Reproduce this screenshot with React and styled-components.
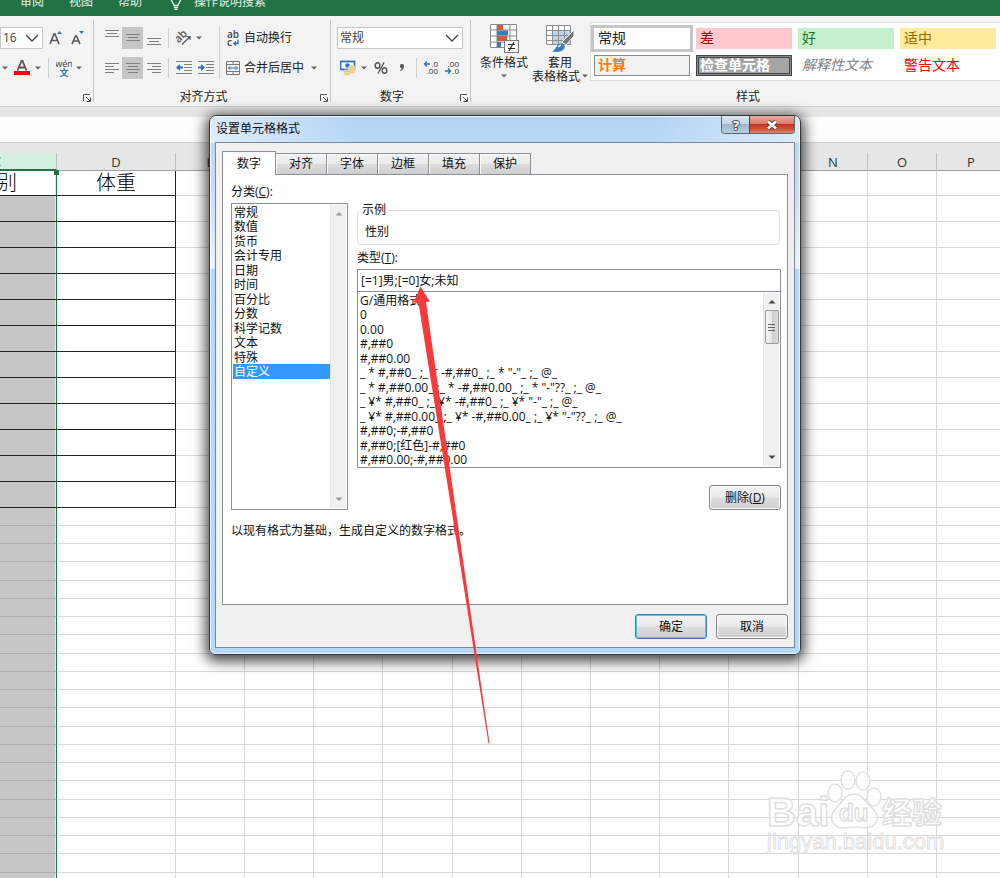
import React, {useState} from 'react';
import styled, {createGlobalStyle, css} from 'styled-components';

const GlobalStyle = createGlobalStyle`
  *, *::before, *::after {
    box-sizing: border-box;
  }

  body {
    margin: 0;
    overflow: hidden;
    background: #fff;
    color: #222;
    font-family: "Open Sans", "Noto Sans CJK SC", sans-serif;
    font-size: 12px;
    line-height: 16px;
  }

  button, input, select {
    font: inherit;
    color: inherit;
  }

  svg {
    display: block;
    flex: none;
  }
`

const Page = styled.div`
  position: relative;
  display: flex;
  flex-direction: column;
  height: 100vh;
  overflow: hidden;
`

/* ---------- ribbon ---------- */

const RibbonTabs = styled.nav`
  display: flex;
  flex: none;
  align-items: flex-end;
  gap: 25px;
  height: 16px;
  padding-left: 20px;
  overflow: hidden;
  background: #217346;
  color: #e6f1ea;

  a {
    display: flex;
    align-items: center;
    gap: 12px;
    height: 28px;
    color: inherit;
    text-decoration: none;
  }

  a:last-child {
    margin-left: 3px;
  }
`

const RibbonBar = styled.div`
  display: flex;
  flex: none;
  height: 91px;
  overflow: hidden;
  background: #f3f3f3;
  border-bottom: 1px solid #d2d2d2;
`

const Group = styled.section`
  display: flex;
  flex-direction: column;
  flex: ${({$grow}) => $grow ? '1 0 554px' : 'none'};
  width: ${({$width}) => $width ? $width + 'px' : 'auto'};
  padding-top: 11px;
  position: relative;

  &:not(:last-child)::after {
    content: '';
    position: absolute;
    top: 4px;
    bottom: 4px;
    right: 0;
    width: 1px;
    background: #c4c4c4;
  }
`

const GroupContent = styled.div`
  display: flex;
  height: 52px;
  padding-left: ${({$indent}) => $indent || 0}px;
`

const GroupFooter = styled.div`
  display: flex;
  justify-content: center;
  margin-top: 10px;
  padding-right: ${({$launcher}) => $launcher ? 18 : 0}px;
  position: relative;
`

const Launcher = styled.button`
  position: absolute;
  right: 3px;
  top: 5px;
  padding: 0;
  border: none;
  background: none;
`

const Stack = styled.div`
  display: flex;
  flex-direction: column;
  gap: 8px;
`

const Row = styled.div`
  display: flex;
  align-items: center;
  height: 22px;
`

const Tool = styled.button`
  display: flex;
  align-items: center;
  justify-content: center;
  width: ${({$width}) => $width || 21}px;
  height: 22px;
  padding: 0;
  border: none;
  background: ${({$active}) => $active ? '#c6c6c6' : 'none'};
`

const LabelTool = styled(Tool)`
  justify-content: flex-start;
  width: auto;
  gap: 3px;
  padding-left: 3px;
  white-space: nowrap;
`

const Divider = styled.span`
  width: 1px;
  height: ${({$tall}) => $tall ? 52 : 20}px;
  margin: 0 ${({$gap}) => $gap}px;
  background: #d0d0d0;
`

const Combo = styled.div`
  display: flex;
  align-items: center;
  position: relative;
  width: ${({$width}) => $width}px;
  height: 22px;
  background: #fff;
  border: 1px solid #c6c6c6;

  select {
    width: 100%;
    height: 20px;
    padding: 0 2px;
    border: none;
    outline: none;
    background: none;
    appearance: none;
    color: #444;
  }

  svg {
    position: absolute;
    right: 3px;
    pointer-events: none;
  }
`

const BigTool = styled.button`
  display: flex;
  flex-direction: column;
  align-items: center;
  width: 56px;
  height: 64px;
  padding: 0;
  margin-top: -4px;
  border: none;
  background: none;
  line-height: 14px;
  white-space: nowrap;

  svg:first-child {
    margin-bottom: 3px;
  }
`

const BigLabel = styled.span`
  display: flex;
  align-items: center;
  justify-content: center;
  gap: 2px;
  height: 14px;
`

const Gallery = styled.div`
  display: grid;
  grid-template-columns: repeat(4, 96px);
  grid-auto-rows: 21px;
  gap: 6px;
  flex: 1;
  height: 59px;
  margin: -5px 0 0 2px;
  padding: 5px 3px;
  background: #fff;
  border: 1px solid #dadada;
`

const StyleCell = styled.button`
  padding: 0 4px 2px;
  border: none;
  background: ${({$bg}) => $bg || '#fff'};
  color: ${({$color}) => $color || '#222'};
  font-size: 14px;
  line-height: 18px;
  text-align: left;
  white-space: nowrap;
  font-weight: ${({$bold}) => $bold ? 700 : 400};
  font-style: ${({$italic}) => $italic ? 'italic' : 'normal'};
  ${({$variant}) => $variant === 'selected' && css`
    outline: 3px solid #c6c6c6;
  `}
  ${({$variant}) => $variant === 'boxed' && css`
    box-shadow: inset 0 0 0 1px #8a8a8a;
  `}
  ${({$variant}) => $variant === 'double' && css`
    box-shadow: inset 0 0 0 1px #444, inset 0 0 0 2px #8a8a8a, inset 0 0 0 3px #444;
  `}
`

/* ---------- sheet ---------- */

const FormulaBar = styled.div`
  flex: none;
  height: 36px;
  background: #fdfdfd;
  border-top: 10px solid #e6e6e6;
  border-bottom: 1px solid #d0d0d0;
`

const Sheet = styled.main`
  flex: 1;
  overflow: hidden;
  padding-top: 10px;
  background: linear-gradient(#e6e6e6 10px, #fff 10px);
`

const Grid = styled.table`
  table-layout: fixed;
  width: 1px;
  margin-left: -62px;
  border-spacing: 0;

  th, td {
    padding: 0;
    text-align: center;
    border-right: 1px solid #d8d8d8;
    border-bottom: 1px solid #d8d8d8;
  }

  th {
    height: 18px;
    background: #e6e6e6;
    border-right-color: #bdbdbd;
    border-bottom-color: #a0a0a0;
    color: #333;
    font-size: 13px;
    font-weight: 400;
    line-height: 16px;
  }

  td {
    height: 18px;
  }

  tr:nth-child(4n) td {
    height: 19px;
  }

  tbody:first-of-type tr td {
    height: 26px;
  }

  tbody:first-of-type tr:first-child td {
    height: 25px;
  }
`

const Col = styled.col`
  width: ${({$width}) => $width}px;
`

const ColumnHead = styled.th`
  ${({$selected}) => $selected && css`
    && {
      background: #d3f0e0;
      border-bottom: 2px solid #217346;
      color: #217346;
      line-height: 15px;
    }
  `}
`

const Cell = styled.td`
  color: #000;
  font-size: 20px;
  font-weight: 300;
  line-height: 24px;
  ${({$framed}) => $framed && css`
    && {
      border-color: #222;
    }
  `}
  ${({$selected}) => $selected && css`
    && {
      position: relative;
      background: ${({$active}) => $active ? '#fff' : '#c6c6c6'};
      border-right: 1px solid #217346;
      border-bottom-color: ${({$framed}) => $framed ? '#222' : '#adadad'};
      box-shadow: inset -1px 0 #dfe9e3;
    }
  `}
`

const Handle = styled.span`
  position: absolute;
  top: -1px;
  right: -3px;
  z-index: 1;
  width: 5px;
  height: 5px;
  background: #217346;
`

/* ---------- dialog ---------- */

const Dialog = styled.div`
  position: absolute;
  top: 115px;
  left: 209px;
  width: 592px;
  padding: 0 5px 6px;
  border: 1px solid #34383e;
  border-radius: 7px 7px 6px 6px;
  background:
    linear-gradient(90deg, rgba(255, 255, 255, .55), rgba(255, 255, 255, 0) 25%, rgba(255, 255, 255, 0) 75%, rgba(255, 255, 255, .5)) 0 0 / 100% 27px no-repeat,
    linear-gradient(#b2d2f3, #b8d8f8 27px, #cadbee 50px, #c8dbf0 66px, #eaf3fc 153px, #b5d8fb 153px);
  box-shadow: inset 0 0 0 1px rgba(255, 255, 255, .7), 0 3px 14px 3px rgba(0, 0, 0, .75);
  color: #111;
`

const TitleBar = styled.header`
  display: flex;
  align-items: flex-start;
  justify-content: space-between;
  height: 26px;
  padding-left: 1px;

  h1 {
    margin: 5px 0 0;
    font-size: 12px;
    font-weight: 400;
    line-height: 16px;
  }
`

const WindowButtons = styled.div`
  display: flex;
  border: 1px solid #5c6672;
  border-top: none;
  border-radius: 0 0 4px 4px;
  overflow: hidden;
`

const WindowButton = styled.button`
  display: flex;
  align-items: center;
  justify-content: center;
  width: ${({$close}) => $close ? 45 : 27}px;
  height: 17px;
  padding: 0;
  border: none;
  border-left: ${({$close}) => $close ? '1px solid #7c2b22' : 'none'};
  background: ${({$close}) => $close
    ? 'linear-gradient(#e9a99e, #d9796b 48%, #bf3421 50%, #cf5a3f 80%, #e08a6c)'
    : 'linear-gradient(#dbe6f2, #c3d3e4 48%, #9db3ca 50%, #b9cde2)'};
`

const DialogBody = styled.div`
  padding: 8px 6px 8px 6px;
  background: #f0f0f0;
  border: 1px solid #7d8793;
`

const TabList = styled.div`
  display: flex;
  align-items: flex-end;
  height: 23px;
`

const Tab = styled.button`
  width: 51px;
  height: 21px;
  padding: 0;
  border: 1px solid #8c9099;
  border-left: none;
  border-bottom: none;
  background: linear-gradient(#f2f2f2, #ebebeb 50%, #dcdcdc 52%, #cfcfcf);
  box-shadow: inset 1px 1px #fafafa;
  ${({$active}) => $active && css`
    position: relative;
    z-index: 1;
    width: 54px;
    height: 24px;
    margin-bottom: -1px;
    border-left: 1px solid #8c9099;
    background: #fff;
  `}
`

const Panel = styled.div`
  min-height: 431px;
  padding: 9px 6px 0 8px;
  background: #fff;
  border: 1px solid #8c9099;
`

const Columns = styled.div`
  display: grid;
  grid-template-columns: 117px 1fr;
  column-gap: 9px;
`

const FieldLabel = styled.label`
  display: block;
  margin-bottom: 3px;
`

const ListFrame = styled.div`
  display: flex;
  height: ${({$height}) => $height}px;
  padding: 1px;
  border: 1px solid #8c9099;
  background: #fff;
`

const List = styled.ul`
  flex: 1;
  margin: 0;
  padding: 0;
  overflow: hidden;
  list-style: none;
`

const Option = styled.li`
  height: 14px;
  padding-left: 1px;
  line-height: 15px;
  white-space: pre;
  background: ${({$selected}) => $selected ? '#3399ff' : 'none'};
  color: ${({$selected}) => $selected ? '#fff' : 'inherit'};

  &:nth-child(even) {
    height: 15px;
  }
`

const ScrollTrack = styled.div`
  display: flex;
  flex-direction: column;
  align-items: center;
  width: 16px;
  padding: 6px 0;
  background: #f0f0f0;
  border-left: 1px solid #e6e6e6;

  svg:last-child {
    margin-top: auto;
  }
`

const ScrollThumb = styled.div`
  display: flex;
  flex-direction: column;
  align-items: center;
  justify-content: center;
  gap: 2px;
  width: 14px;
  height: 34px;
  margin-top: 6px;
  border: 1px solid #979797;
  border-radius: 2px;
  background: linear-gradient(90deg, #f5f5f5, #e6e6e6 50%, #cdcdcd 52%, #dcdcdc);

  i {
    width: 7px;
    height: 1px;
    background: #666;
  }
`

const Sample = styled.fieldset`
  min-width: 0;
  margin: 18px 1px 5px 0;
  padding: 6px 7px 4px;
  border: 1px solid #d5dfe8;
  border-radius: 4px;

  legend {
    margin-left: -5px;
    padding: 0 2px;
  }
`

const TypeInput = styled.input`
  display: block;
  width: 100%;
  height: 23px;
  margin-bottom: -1px;
  padding: 0 3px 2px;
  border: 1px solid #8c9099;
  border-radius: 0;
  outline: none;
  background: #fff;
`

const DialogButton = styled.button`
  width: 72px;
  height: 25px;
  padding: 0;
  border: 1px solid ${({$primary}) => $primary ? '#3c7fb1' : '#838383'};
  border-radius: 3px;
  background: linear-gradient(#f3f3f3, #ebebeb 48%, #dcdcdc 52%, #cfcfcf);
  box-shadow: inset 0 0 0 1px ${({$primary}) => $primary ? '#48cdf4' : '#fbfbfb'};
`

const Actions = styled.div`
  display: flex;
  justify-content: flex-end;
  gap: 9px;
  margin-top: ${({$top}) => $top}px;
`

const Hint = styled.p`
  margin: 13px 0 0;
  white-space: nowrap;
`

const Annotation = styled.svg`
  position: absolute;
  top: 286px;
  left: 412px;
  pointer-events: none;
`

const Watermark = styled.svg`
  position: absolute;
  right: 50px;
  bottom: 16px;
  pointer-events: none;
`

/* ---------- icons ---------- */

const Caret = () => (
    <svg width="6" height="4"><path d="M0 0.5h6L3 3.5z" fill="#666"/></svg>
)

const Chevron = () => (
    <svg width="14" height="8"><path d="M1 1l6 6 6-6" fill="none" stroke="#444" strokeWidth="1.3"/></svg>
)

const LauncherIcon = () => (
    <svg width="8" height="8" fill="none" stroke="#555">
        <path d="M0.5 7V0.5H7M3 3l4 4M7.500 3.500v4h-4"/>
    </svg>
)

const ScrollArrow = ({up, color}) => (
    <svg width="8" height="5"><path d={up ? 'M0.500 4.500h7L4 1z' : 'M0.500 0.500h7L4 4z'} fill={color}/></svg>
)

const LINES = {
    left: [[0, 14], [0, 9], [0, 14], [0, 9]],
    center: [[0, 14], [2, 10], [0, 14], [2, 10]],
    right: [[0, 14], [5, 9], [0, 14], [5, 9]],
}

const AlignIcon = ({kind}) => (
    <svg width="14" height="12" fill="#808080">
        {LINES[kind].map(([x, width], i) => (
            <rect key={i} x={x} y={i * 3 + 1} width={width} height="1"/>
        ))}
    </svg>
)

const VerticalIcon = ({top}) => (
    <svg width="14" height="22" fill="#808080">
        <rect x="0" y={top} width="14" height="1"/>
        <rect x="2" y={top + 3} width="10" height="1"/>
        <rect x="0" y={top + 6} width="14" height="1"/>
    </svg>
)

const IndentIcon = ({out}) => (
    <svg width="16" height="14" fill="#808080">
        <path d="M0 0h16v1H0zM8 3h8v1H8zM8 6h8v1H8zM8 9h8v1H8zM0 12h16v1H0z"/>
        <path d={out ? 'M0 6.500l4-3.500v2.500h3v2H4V10z' : 'M7 6.500L3 3v2.500H0v2h3V10z'} fill="#2e75b6"/>
    </svg>
)

const FontSizeIcon = ({grow}) => (
    <svg width="14" height="16">
        <path d={grow ? 'M1 14L5 4h1l4 10M2.500 10.500h6' : 'M1 14l3.500-8h1L9 14M2.500 11h5'} fill="none" stroke="#555"
              strokeWidth="1.6"/>
        <path d={grow ? 'M8 4h5L10.500 1z' : 'M8 1h5l-2.500 3z'} fill="#2e75b6"/>
    </svg>
)

const FontColorIcon = () => (
    <svg width="16" height="16">
        <path d="M3.500 10.500L7.500 1h1l4 9.500M5 7.500h6" fill="none" stroke="#555" strokeWidth="1.8"/>
        <rect y="11" width="16" height="4" fill="#f00"/>
    </svg>
)

const PhoneticIcon = () => (
    <svg width="16" height="18" fontFamily="Open Sans, Noto Sans CJK SC, sans-serif">
        <text x="8" y="8" fontSize="9" textAnchor="middle" fill="#333">wén</text>
        <text x="8" y="17" fontSize="9" fontWeight="700" textAnchor="middle" fill="#2e75b6">文</text>
    </svg>
)

const OrientationIcon = () => (
    <svg width="17" height="16" fontFamily="Open Sans, sans-serif">
        <text x="1" y="10" fontSize="11" fontWeight="600" fill="#555" transform="rotate(-45 6 10)">ab</text>
        <path d="M6 14.500l8-8M10.500 6.500H14V10" fill="none" stroke="#555" strokeWidth="1.2"/>
    </svg>
)

const WrapIcon = () => (
    <svg width="16" height="18" fontFamily="Open Sans, sans-serif" fontWeight="600" fill="#444">
        <text x="2" y="9" fontSize="10">ab</text>
        <text x="2" y="17" fontSize="10">c</text>
        <path d="M13 10.500v4H9M11 12.500l-2 2 2 2" fill="none" stroke="#2e75b6" strokeWidth="1.4"/>
    </svg>
)

const MergeIcon = () => (
    <svg width="16" height="16" fill="none" stroke="#777">
        <path d="M1.500 1.500h13v13h-13zM1.500 4.500h13M1.500 11.500h13M8 1.500v3M8 11.500v3"/>
        <path d="M3.500 8h9M5.500 6l-2 2 2 2M10.500 6l2 2-2 2" stroke="#2e75b6"/>
    </svg>
)

const CurrencyIcon = () => (
    <svg width="16" height="16">
        <rect x="0.500" y="1.500" width="14" height="8" fill="#fff" stroke="#2e75b6" strokeWidth="1.8"/>
        <circle cx="7.500" cy="5.500" r="2.200" fill="#2e75b6"/>
        <g fill="#f0c070" stroke="#f3f3f3" strokeWidth="0.600">
            <ellipse cx="12" cy="12" rx="3.500" ry="1.500"/>
            <ellipse cx="12" cy="9.500" rx="3.500" ry="1.500"/>
            <ellipse cx="12" cy="7" rx="3.500" ry="1.500"/>
            <ellipse cx="7" cy="14" rx="3.500" ry="1.500"/>
            <ellipse cx="7" cy="11.500" rx="3.500" ry="1.500"/>
        </g>
    </svg>
)

const DecimalIcon = ({more}) => (
    <svg width="16" height="16" fontFamily="Open Sans, sans-serif" fontSize="8" fill="#333">
        <text x="15" y="7" textAnchor="end">{more ? '.0' : '.00'}</text>
        <text x="15" y="14" textAnchor="end">{more ? '.00' : '.0'}</text>
        {more
            ? <path d="M7 4H1.500M4 1.500L1.500 4 4 6.500" fill="none" stroke="#2e75b6" strokeWidth="1.400"/>
            : <path d="M1 11h5.500M4 8.500L6.500 11 4 13.500" fill="none" stroke="#2e75b6" strokeWidth="1.400"/>}
    </svg>
)

const ConditionalIcon = () => (
    <svg width="30" height="30">
        <path d="M1.500 1.500h26v23h-26zM8 1.500v23M21 1.500v23M1.500 7h26M1.500 13h26M1.500 19h26" fill="#fff"
              stroke="#8a8a8a"/>
        <path d="M8 2h6v5H8zM8 13h10v5H8z" fill="#d9593c"/>
        <path d="M8 7.500h11v5H8zM8 19h4v5H8z" fill="#3b7cbd"/>
        <rect x="15.500" y="17.500" width="14" height="12" fill="#fff" stroke="#777"/>
        <path d="M19 21.500h7M19 25.500h7M25 19l-5 9" stroke="#333" strokeWidth="1.200"/>
    </svg>
)

const FormatTableIcon = () => (
    <svg width="30" height="30">
        <rect x="1.500" y="2.500" width="24" height="19" fill="#fff"/>
        <path d="M8 8h18v14H8z" fill="#bdd3ea"/>
        <path d="M1.500 2.500h24v19h-24zM7.500 2.500v19M13.500 2.500v19M19.500 2.500v19M1.500 7.500h24M1.500 12.500h24M1.500 17.500h24"
              fill="none" stroke="#8f8f8f"/>
        <path d="M29 7v6l-8 9-4-3z" fill="#777" stroke="#f3f3f3"/>
        <path d="M7 28.500c4-1 4-8 9-8 4 0 5 4 2 6.500-3 2.500-7 2-11 1.500z" fill="#3b7cbd"/>
        <path d="M13 24l3-2" stroke="#fff" strokeWidth="1.500"/>
    </svg>
)

const BulbIcon = () => (
    <svg width="12" height="16" fill="none" stroke="#e6f1ea" strokeWidth="1.300">
        <path d="M4 11.500C4 9 1 7.500 1 4.500a5 5 0 0 1 10 0c0 3-3 4.500-3 7zM4 13.500h4M4.500 15.300h3"/>
    </svg>
)

const HelpIcon = () => (
    <svg width="12" height="14">
        <text x="6" y="12" fontFamily="Open Sans, sans-serif" fontSize="13" fontWeight="700" textAnchor="middle"
              fill="#fff" stroke="#4a5563" strokeWidth="2" paintOrder="stroke">?</text>
    </svg>
)

const CloseIcon = () => (
    <svg width="14" height="12">
        <path d="M3 2.500l8 7M11 2.500l-8 7" stroke="#5a3a3a" strokeWidth="4.500"/>
        <path d="M3 2.500l8 7M11 2.500l-8 7" stroke="#fff" strokeWidth="2.800"/>
    </svg>
)

/* ---------- data ---------- */

const STYLES = [
    {name: '常规', $variant: 'selected'},
    {name: '差', $bg: '#ffc7ce', $color: '#9c0006'},
    {name: '好', $bg: '#c6efce', $color: '#1c7a1c'},
    {name: '适中', $bg: '#ffeb9c', $color: '#9c6500'},
    {name: '计算', $bg: '#f2f2f2', $color: '#fa7d00', $bold: true, $variant: 'boxed'},
    {name: '检查单元格', $bg: '#a5a5a5', $color: '#fff', $bold: true, $variant: 'double'},
    {name: '解释性文本', $color: '#7f7f7f', $italic: true},
    {name: '警告文本', $color: '#f00'},
]

const COLUMNS = 'CDEFGHIJKLMNOPQRSTUVWXYZ'.split('').map(name => ({
    name,
    width: name < 'E' ? 119 : name === 'H' || name === 'M' ? 70 : 69,
}))

const FRAMED_ROWS = 13
const PLAIN_ROWS = 60

const TABS = ['数字', '对齐', '字体', '边框', '填充', '保护']

const CATEGORIES = ['常规', '数值', '货币', '会计专用', '日期', '时间', '百分比', '分数', '科学记数', '文本', '特殊', '自定义']

const FORMATS = [
    'G/通用格式',
    '0',
    '0.00',
    '#,##0',
    '#,##0.00',
    '_ * #,##0_ ;_ * -#,##0_ ;_ * "-"_ ;_ @_ ',
    '_ * #,##0.00_ ;_ * -#,##0.00_ ;_ * "-"??_ ;_ @_ ',
    '_ ¥* #,##0_ ;_ ¥* -#,##0_ ;_ ¥* "-"_ ;_ @_ ',
    '_ ¥* #,##0.00_ ;_ ¥* -#,##0.00_ ;_ ¥* "-"??_ ;_ @_ ',
    '#,##0;-#,##0',
    '#,##0;[红色]-#,##0',
    '#,##0.00;-#,##0.00',
]

/* ---------- parts ---------- */

const GroupLabel = ({children, launcher = true}) => (
    <GroupFooter $launcher={launcher}>
        {children}
        {launcher && <Launcher type="button" aria-label="更多设置"><LauncherIcon/></Launcher>}
    </GroupFooter>
)

const Ribbon = () => (
    <>
        <RibbonTabs>
            <a href="#review">审阅</a>
            <a href="#view">视图</a>
            <a href="#help">帮助</a>
            <a href="#search"><BulbIcon/>操作说明搜索</a>
        </RibbonTabs>
        <RibbonBar>
            <Group $width={94}>
                <GroupContent>
                    <Stack>
                        <Row>
                            <Combo $width={43}>
                                <select aria-label="字号" defaultValue="16">
                                    <option>16</option>
                                </select>
                                <Chevron/>
                            </Combo>
                            <Tool $width={26} aria-label="增大字号"><FontSizeIcon grow/></Tool>
                            <Tool $width={18} aria-label="减小字号"><FontSizeIcon/></Tool>
                        </Row>
                        <Row>
                            <Tool $width={10} aria-label="填充颜色"><Caret/></Tool>
                            <Tool $width={23} aria-label="字体颜色"><FontColorIcon/></Tool>
                            <Tool $width={10} aria-label="选择颜色"><Caret/></Tool>
                            <Divider $gap={5}/>
                            <Tool $width={20} aria-label="拼音"><PhoneticIcon/></Tool>
                            <Tool $width={10} aria-label="拼音设置"><Caret/></Tool>
                        </Row>
                    </Stack>
                </GroupContent>
                <GroupLabel>&nbsp;</GroupLabel>
            </Group>
            <Group $width={237}>
                <GroupContent $indent={7}>
                    <Stack>
                        <Row>
                            <Tool aria-label="顶端对齐"><VerticalIcon top={3}/></Tool>
                            <Tool $active aria-label="垂直居中"><VerticalIcon top={7}/></Tool>
                            <Tool aria-label="底端对齐"><VerticalIcon top={11}/></Tool>
                            <Divider $gap={4}/>
                            <Tool $width={22} aria-label="方向"><OrientationIcon/></Tool>
                            <Tool $width={8} aria-label="方向选项"><Caret/></Tool>
                        </Row>
                        <Row>
                            <Tool aria-label="左对齐"><AlignIcon kind="left"/></Tool>
                            <Tool $active aria-label="居中"><AlignIcon kind="center"/></Tool>
                            <Tool aria-label="右对齐"><AlignIcon kind="right"/></Tool>
                            <Divider $gap={4}/>
                            <Tool $width={22} aria-label="减少缩进量"><IndentIcon out/></Tool>
                            <Tool $width={22} aria-label="增加缩进量"><IndentIcon/></Tool>
                        </Row>
                    </Stack>
                    <Divider $tall $gap={2}/>
                    <Stack>
                        <Row><LabelTool><WrapIcon/>自动换行</LabelTool></Row>
                        <Row>
                            <LabelTool><MergeIcon/>合并后居中</LabelTool>
                            <Tool $width={20} aria-label="合并选项"><Caret/></Tool>
                        </Row>
                    </Stack>
                </GroupContent>
                <GroupLabel>对齐方式</GroupLabel>
            </Group>
            <Group $width={140}>
                <GroupContent $indent={6}>
                    <Stack>
                        <Combo $width={126}>
                            <select aria-label="数字格式" defaultValue="常规">
                                <option>常规</option>
                            </select>
                            <Chevron/>
                        </Combo>
                        <Row>
                            <Tool $width={22} aria-label="会计数字格式"><CurrencyIcon/></Tool>
                            <Tool $width={10} aria-label="货币选项"><Caret/></Tool>
                            <Tool $width={24} aria-label="百分比样式">
                                <svg width="14" height="14" fill="none" stroke="#555" strokeWidth="1.400">
                                    <ellipse cx="3.500" cy="4.500" rx="2.300" ry="2.800"/>
                                    <ellipse cx="10.500" cy="9.500" rx="2.300" ry="2.800"/>
                                    <path d="M10 1.500l-6 11"/>
                                </svg>
                            </Tool>
                            <Tool $width={18} aria-label="千位分隔样式">
                                <svg width="6" height="10">
                                    <path d="M3 1a2 2 0 0 1 2 2.200C5 5.500 3.500 7 1.500 8L1 7.200C2.200 6.500 2.800 5.800 2.800 5A2 2 0 0 1 3 1z"
                                          fill="#555"/>
                                </svg>
                            </Tool>
                            <Divider $gap={5}/>
                            <Tool $width={18} aria-label="增加小数位数"><DecimalIcon more/></Tool>
                            <Tool $width={24} aria-label="减少小数位数"><DecimalIcon/></Tool>
                        </Row>
                    </Stack>
                </GroupContent>
                <GroupLabel>数字</GroupLabel>
            </Group>
            <Group $grow>
                <GroupContent $indent={5}>
                    <BigTool>
                        <ConditionalIcon/>
                        <BigLabel>条件格式</BigLabel>
                        <BigLabel><Caret/></BigLabel>
                    </BigTool>
                    <BigTool>
                        <FormatTableIcon/>
                        <BigLabel>套用</BigLabel>
                        <BigLabel>表格格式<Caret/></BigLabel>
                    </BigTool>
                    <Gallery>
                        {STYLES.map(({name, ...style}) => (
                            <StyleCell key={name} type="button" {...style}>{name}</StyleCell>
                        ))}
                    </Gallery>
                </GroupContent>
                <GroupLabel launcher={false}>样式</GroupLabel>
            </Group>
        </RibbonBar>
    </>
)

const renderRow = (row, framed) => (
    <tr key={row}>
        {COLUMNS.map(({name}) => (
            <Cell key={name} $framed={framed && name < 'E'} $selected={name === 'C'} $active={framed && row === 0}>
                {framed && row === 0 && name === 'C' && <>性别<Handle/></>}
                {framed && row === 0 && name === 'D' && '体重'}
            </Cell>
        ))}
    </tr>
)

const Spreadsheet = () => (
    <Sheet>
        <Grid>
            <colgroup>
                {COLUMNS.map(({name, width}) => <Col key={name} $width={width}/>)}
            </colgroup>
            <thead>
            <tr>
                {COLUMNS.map(({name}) => (
                    <ColumnHead key={name} scope="col" $selected={name === 'C'}>{name}</ColumnHead>
                ))}
            </tr>
            </thead>
            <tbody>
            {Array.from({length: FRAMED_ROWS}, (_, row) => renderRow(row, true))}
            </tbody>
            <tbody>
            {Array.from({length: PLAIN_ROWS}, (_, row) => renderRow(row, false))}
            </tbody>
        </Grid>
    </Sheet>
)

const FormatDialog = () => {
    const [tab, setTab] = useState('数字')
    const [category, setCategory] = useState('自定义')
    const [type, setType] = useState('[=1]男;[=0]女;未知')

    return (
        <Dialog role="dialog" aria-labelledby="dialog-title">
            <TitleBar>
                <h1 id="dialog-title">设置单元格格式</h1>
                <WindowButtons>
                    <WindowButton type="button" aria-label="帮助"><HelpIcon/></WindowButton>
                    <WindowButton type="button" $close aria-label="关闭"><CloseIcon/></WindowButton>
                </WindowButtons>
            </TitleBar>
            <DialogBody>
                <TabList role="tablist">
                    {TABS.map(name => (
                        <Tab key={name} type="button" role="tab" aria-selected={name === tab} $active={name === tab}
                             onClick={() => setTab(name)}>{name}</Tab>
                    ))}
                </TabList>
                <Panel role="tabpanel">
                    <Columns>
                        <div>
                            <FieldLabel as="div" id="category-label">分类(<u>C</u>):</FieldLabel>
                            <ListFrame $height={307}>
                                <List role="listbox" aria-labelledby="category-label">
                                    {CATEGORIES.map(name => (
                                        <Option key={name} role="option" aria-selected={name === category}
                                                $selected={name === category}
                                                onClick={() => setCategory(name)}>{name}</Option>
                                    ))}
                                </List>
                                <ScrollTrack>
                                    <ScrollArrow up color="#999"/>
                                    <ScrollArrow color="#999"/>
                                </ScrollTrack>
                            </ListFrame>
                        </div>
                        <div>
                            <Sample>
                                <legend>示例</legend>
                                性别
                            </Sample>
                            <FieldLabel htmlFor="format-type">类型(<u>T</u>):</FieldLabel>
                            <TypeInput id="format-type" value={type} autoFocus
                                       onChange={event => setType(event.target.value)}/>
                            <ListFrame $height={177}>
                                <List role="listbox" aria-label="类型">
                                    {FORMATS.map(format => (
                                        <Option key={format} role="option" aria-selected={format === type}
                                                onClick={() => setType(format)}>{format}</Option>
                                    ))}
                                </List>
                                <ScrollTrack>
                                    <ScrollArrow up color="#444"/>
                                    <ScrollThumb><i/><i/><i/></ScrollThumb>
                                    <ScrollArrow color="#444"/>
                                </ScrollTrack>
                            </ListFrame>
                            <Actions $top={17}>
                                <DialogButton type="button">删除(<u>D</u>)</DialogButton>
                            </Actions>
                        </div>
                    </Columns>
                    <Hint>以现有格式为基础，生成自定义的数字格式。</Hint>
                </Panel>
                <Actions $top={9}>
                    <DialogButton type="button" $primary>确定</DialogButton>
                    <DialogButton type="button">取消</DialogButton>
                </Actions>
            </DialogBody>
        </Dialog>
    )
}

const App = () => (
    <Page>
        <GlobalStyle/>
        <Ribbon/>
        <FormulaBar/>
        <Spreadsheet/>
        <FormatDialog/>
        <Annotation width="80" height="460" aria-hidden="true">
            <path d="M8.500 0.500L18 15.500l-4 0.500L51 274l26.500 183-1 0.500L47.500 274 6.500 17l-5-0.500z" fill="#fa3a3a"/>
        </Annotation>
        <Watermark width="184" height="96" aria-hidden="true">
            <g fill="#fff" fillOpacity="0.800" stroke="#e0e0e0" strokeWidth="1.500" strokeLinejoin="round"
               fontFamily="Liberation Sans, Noto Sans CJK SC, sans-serif">
                <text x="1" y="60" fontSize="40" fontWeight="700">Bai</text>
                <ellipse cx="69" cy="27" rx="7" ry="9"/>
                <ellipse cx="82" cy="14" rx="7" ry="9"/>
                <ellipse cx="97" cy="15" rx="7" ry="9"/>
                <ellipse cx="108" cy="31" rx="7" ry="9"/>
                <path d="M88 28c8 0 10 6 16 12 8 7 9 13 5 18-5 6-13 3-21 3s-15 3-20-3c-4-5-3-11 4-18 6-6 8-12 16-12z"/>
                <text x="73" y="55" fontSize="24" fontWeight="700">du</text>
                <text x="116" y="57" fontSize="30" fontWeight="700">经验</text>
                <text x="1" y="83" fontSize="22" strokeWidth="1">jingyan.baidu.com</text>
            </g>
        </Watermark>
    </Page>
)

export default App;
